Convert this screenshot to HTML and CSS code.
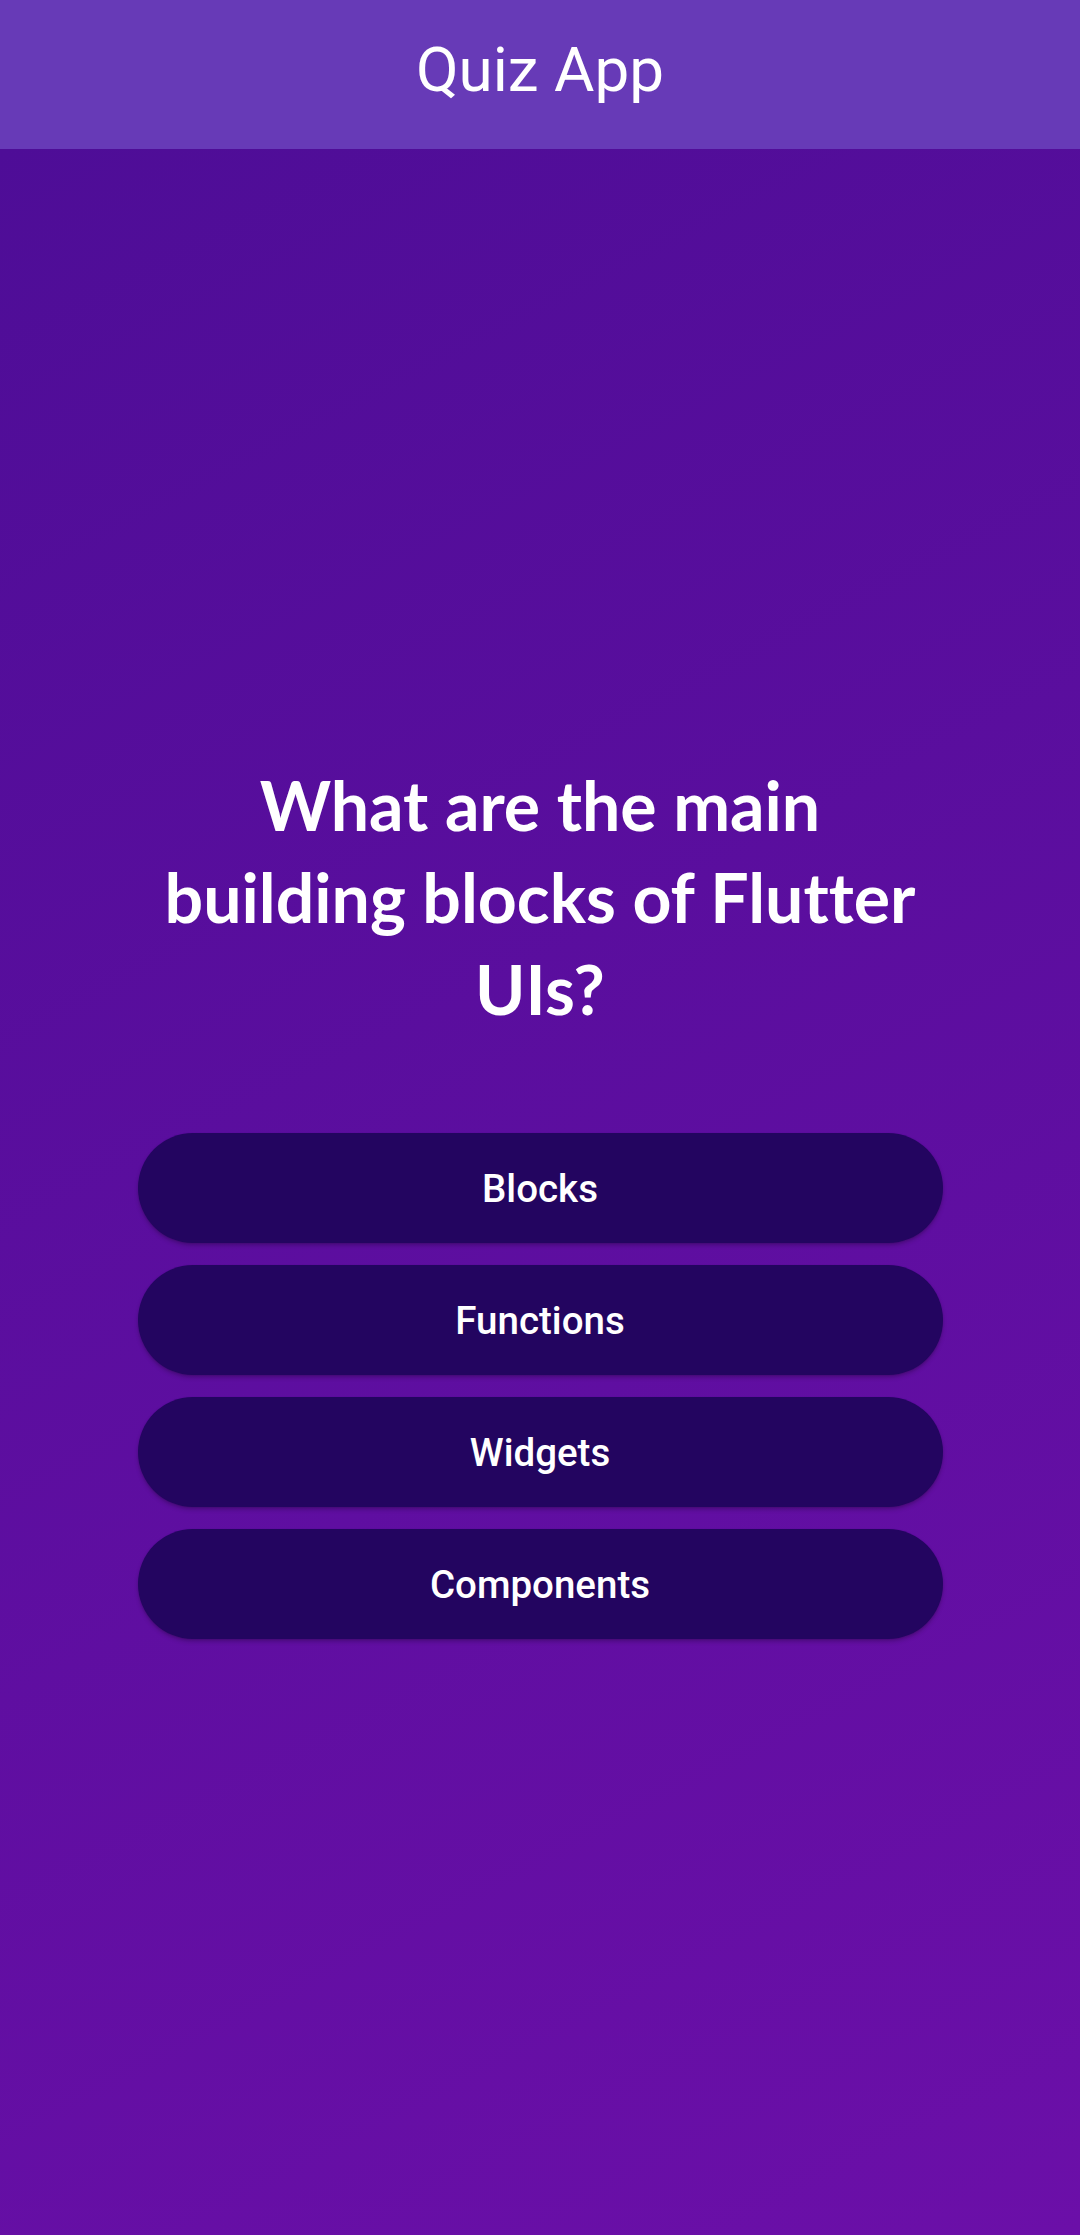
FILE: index.html
```html
<!DOCTYPE html>
<html lang="en">
<head>
<meta charset="utf-8">
<title>Quiz App</title>
<link rel="stylesheet" href="styles.css">
</head>
<body>
<div class="screen">
  <header class="appbar">
    <h1 class="appbar-title">Quiz App</h1>
  </header>
  <main class="quiz">
    <h2 class="question">What are the main building blocks of Flutter UIs?</h2>
    <div class="answers">
      <button class="answer">Blocks</button>
      <button class="answer">Functions</button>
      <button class="answer">Widgets</button>
      <button class="answer">Components</button>
    </div>
  </main>
</div>
</body>
</html>
```
FILE: styles.css
```css
* { box-sizing: border-box; }
html, body { margin: 0; padding: 0; }
body {
  width: 1080px;
  height: 2235px;
  font-family: Roboto, "Noto Sans", sans-serif;
  background: #6a0ea8;
}
.screen {
  display: flex;
  flex-direction: column;
  width: 1080px;
  height: 2235px;
}
.appbar {
  height: 149px;
  flex: none;
  background: #673ab7;
  display: flex;
  align-items: center;
  justify-content: center;
  padding-bottom: 10px;
}
.appbar-title {
  margin: 0;
  font-family: Roboto, sans-serif;
  font-weight: 400;
  font-size: 62px;
  line-height: normal;
  color: #ffffff;
}
.quiz {
  flex: 1;
  background: linear-gradient(152.6deg, rgb(78, 13, 151) 0%, rgb(107, 15, 168) 100%);
  display: flex;
  flex-direction: column;
  align-items: center;
  padding-top: 610px;
}
.question {
  width: 790px;
  margin: 0 0 98px;
  font-family: Lato, "Noto Sans", sans-serif;
  font-weight: 700;
  font-size: 68px;
  line-height: 92px;
  color: #ffffff;
  text-align: center;
  font-variant-ligatures: none;
}
.answers {
  width: 805px;
  display: flex;
  flex-direction: column;
  gap: 22px;
}
.answer {
  height: 110px;
  border: none;
  border-radius: 55px;
  background: #230560;
  color: #ffffff;
  font-family: Roboto, sans-serif;
  font-weight: 500;
  font-size: 38.5px;
  box-shadow: 0 3px 4px rgba(0, 0, 0, 0.18), 0 1px 2px rgba(0, 0, 0, 0.12);
  padding: 0 105px;
}
```
